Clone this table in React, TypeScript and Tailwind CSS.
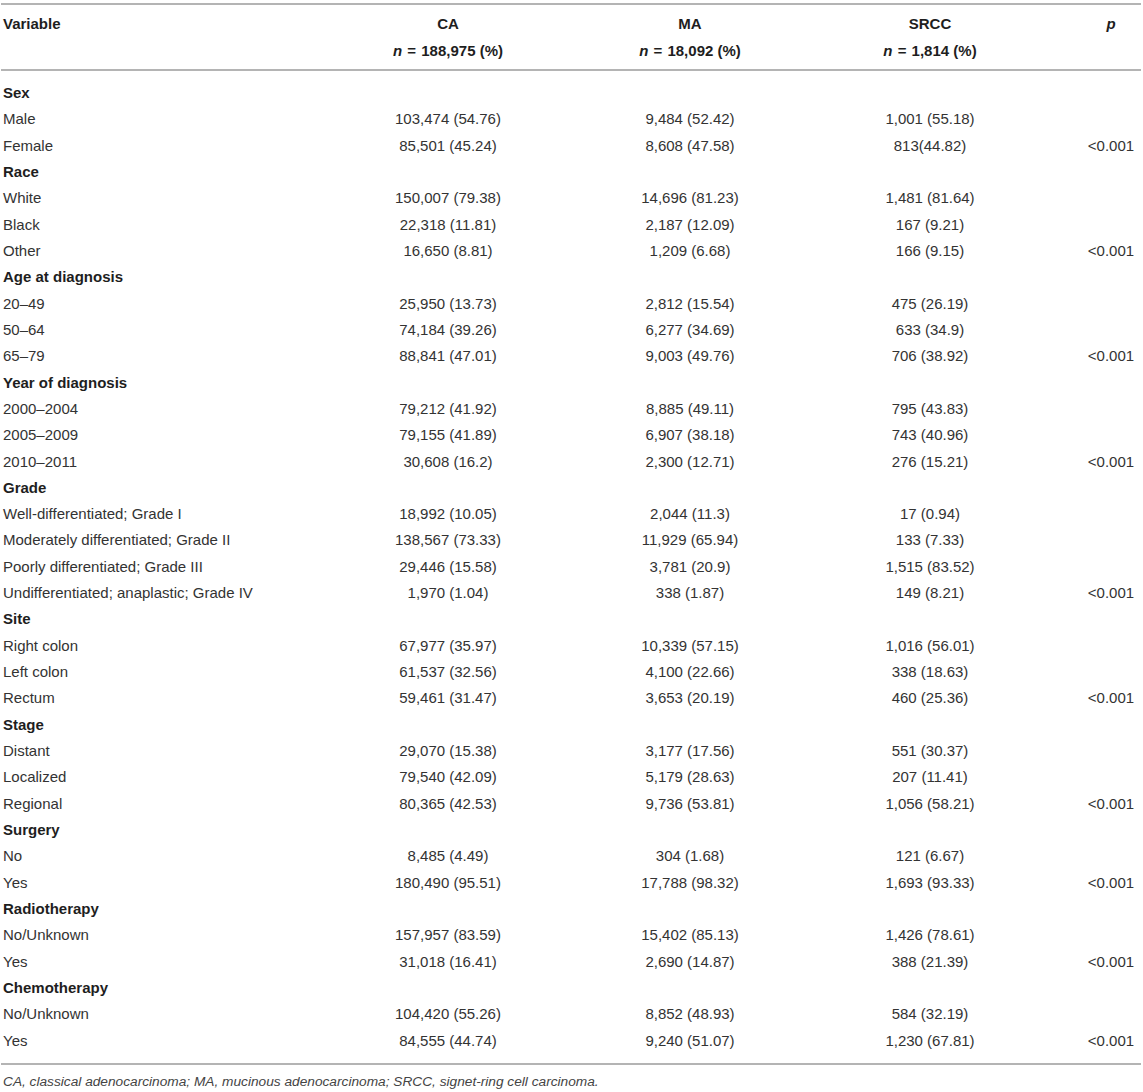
type Row = { label: string; ca?: string; ma?: string; srcc?: string; p?: string; group?: boolean };

const rows: Row[] = [
  { label: 'Sex', group: true },
  { label: 'Male', ca: '103,474 (54.76)', ma: '9,484 (52.42)', srcc: '1,001 (55.18)' },
  { label: 'Female', ca: '85,501 (45.24)', ma: '8,608 (47.58)', srcc: '813(44.82)', p: '<0.001' },
  { label: 'Race', group: true },
  { label: 'White', ca: '150,007 (79.38)', ma: '14,696 (81.23)', srcc: '1,481 (81.64)' },
  { label: 'Black', ca: '22,318 (11.81)', ma: '2,187 (12.09)', srcc: '167 (9.21)' },
  { label: 'Other', ca: '16,650 (8.81)', ma: '1,209 (6.68)', srcc: '166 (9.15)', p: '<0.001' },
  { label: 'Age at diagnosis', group: true },
  { label: '20–49', ca: '25,950 (13.73)', ma: '2,812 (15.54)', srcc: '475 (26.19)' },
  { label: '50–64', ca: '74,184 (39.26)', ma: '6,277 (34.69)', srcc: '633 (34.9)' },
  { label: '65–79', ca: '88,841 (47.01)', ma: '9,003 (49.76)', srcc: '706 (38.92)', p: '<0.001' },
  { label: 'Year of diagnosis', group: true },
  { label: '2000–2004', ca: '79,212 (41.92)', ma: '8,885 (49.11)', srcc: '795 (43.83)' },
  { label: '2005–2009', ca: '79,155 (41.89)', ma: '6,907 (38.18)', srcc: '743 (40.96)' },
  { label: '2010–2011', ca: '30,608 (16.2)', ma: '2,300 (12.71)', srcc: '276 (15.21)', p: '<0.001' },
  { label: 'Grade', group: true },
  { label: 'Well-differentiated; Grade I', ca: '18,992 (10.05)', ma: '2,044 (11.3)', srcc: '17 (0.94)' },
  { label: 'Moderately differentiated; Grade II', ca: '138,567 (73.33)', ma: '11,929 (65.94)', srcc: '133 (7.33)' },
  { label: 'Poorly differentiated; Grade III', ca: '29,446 (15.58)', ma: '3,781 (20.9)', srcc: '1,515 (83.52)' },
  { label: 'Undifferentiated; anaplastic; Grade IV', ca: '1,970 (1.04)', ma: '338 (1.87)', srcc: '149 (8.21)', p: '<0.001' },
  { label: 'Site', group: true },
  { label: 'Right colon', ca: '67,977 (35.97)', ma: '10,339 (57.15)', srcc: '1,016 (56.01)' },
  { label: 'Left colon', ca: '61,537 (32.56)', ma: '4,100 (22.66)', srcc: '338 (18.63)' },
  { label: 'Rectum', ca: '59,461 (31.47)', ma: '3,653 (20.19)', srcc: '460 (25.36)', p: '<0.001' },
  { label: 'Stage', group: true },
  { label: 'Distant', ca: '29,070 (15.38)', ma: '3,177 (17.56)', srcc: '551 (30.37)' },
  { label: 'Localized', ca: '79,540 (42.09)', ma: '5,179 (28.63)', srcc: '207 (11.41)' },
  { label: 'Regional', ca: '80,365 (42.53)', ma: '9,736 (53.81)', srcc: '1,056 (58.21)', p: '<0.001' },
  { label: 'Surgery', group: true },
  { label: 'No', ca: '8,485 (4.49)', ma: '304 (1.68)', srcc: '121 (6.67)' },
  { label: 'Yes', ca: '180,490 (95.51)', ma: '17,788 (98.32)', srcc: '1,693 (93.33)', p: '<0.001' },
  { label: 'Radiotherapy', group: true },
  { label: 'No/Unknown', ca: '157,957 (83.59)', ma: '15,402 (85.13)', srcc: '1,426 (78.61)' },
  { label: 'Yes', ca: '31,018 (16.41)', ma: '2,690 (14.87)', srcc: '388 (21.39)', p: '<0.001' },
  { label: 'Chemotherapy', group: true },
  { label: 'No/Unknown', ca: '104,420 (55.26)', ma: '8,852 (48.93)', srcc: '584 (32.19)' },
  { label: 'Yes', ca: '84,555 (44.74)', ma: '9,240 (51.07)', srcc: '1,230 (67.81)', p: '<0.001' },
];

const cols = 'grid grid-cols-[327px_240px_244px_236px_33px_60px]';

const Count = ({ n }: { n: string }) => (
  <div>
    <i>n</i>
    <span className="mx-[1px]"> = </span>
    {n} (%)
  </div>
);

export default function App() {
  return (
    <div className="bg-white min-h-[1092px] pt-[3px] font-['Liberation_Sans',Arial,sans-serif] text-[15px]">
      <div className="ml-[1px] w-[1140px]">
        <div className="border-t-2 border-[#b4b4b4]" />
        <div className={`${cols} pt-[5px] pb-[5px] font-bold text-[#1e1e1e] leading-[27px]`}>
          <div className="pl-[2px]">Variable</div>
          <div className="text-center whitespace-nowrap">
            <div>CA</div>
            <Count n="188,975" />
          </div>
          <div className="text-center whitespace-nowrap">
            <div>MA</div>
            <Count n="18,092" />
          </div>
          <div className="text-center whitespace-nowrap">
            <div>SRCC</div>
            <Count n="1,814" />
          </div>
          <div />
          <div className="text-center italic">p</div>
        </div>
        <div className="border-t-2 border-[#b4b4b4]" />
        <div className="pt-[9px] pb-[9px]">
          {rows.map((r, i) => (
            <div key={i} className={`${cols} h-[26.33px] items-center`}>
              {r.group ? (
                <div className="pl-[2px] font-bold text-[#1e1e1e] whitespace-nowrap">{r.label}</div>
              ) : (
                <>
                  <div className="pl-[2px] text-[#333] whitespace-nowrap">{r.label}</div>
                  <div className="text-center text-[#333] whitespace-nowrap">{r.ca}</div>
                  <div className="text-center text-[#333] whitespace-nowrap">{r.ma}</div>
                  <div className="text-center text-[#333] whitespace-nowrap">{r.srcc}</div>
                  <div />
                  <div className="text-center text-[#333] whitespace-nowrap">{r.p}</div>
                </>
              )}
            </div>
          ))}
        </div>
        <div className="border-t-2 border-[#b4b4b4]" />
        <p className="pt-[7px] pl-[2px] italic text-[#444] text-[13.7px] leading-[20px]">
          CA, classical adenocarcinoma; MA, mucinous adenocarcinoma; SRCC, signet-ring cell carcinoma.
        </p>
      </div>
    </div>
  );
}
